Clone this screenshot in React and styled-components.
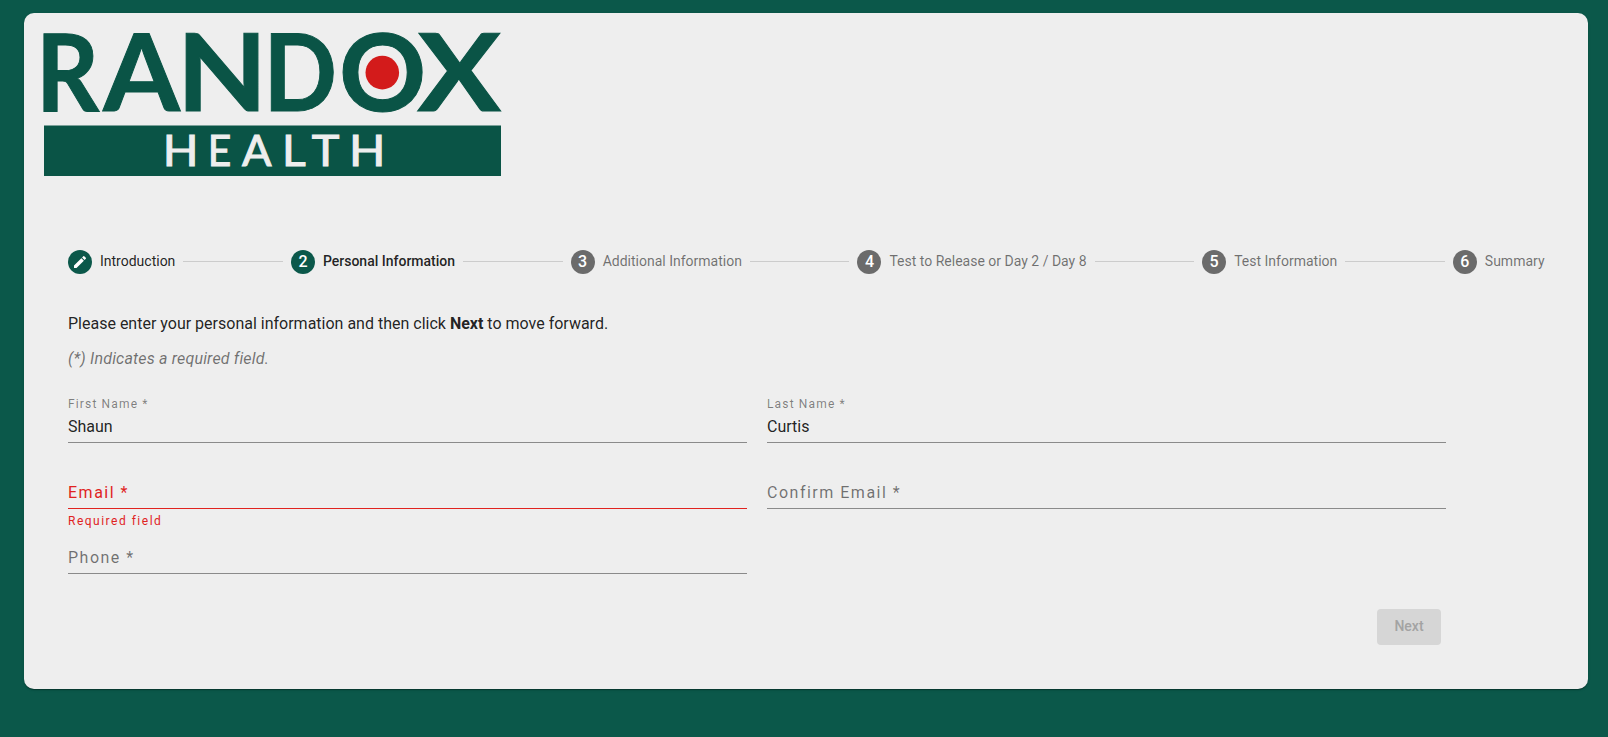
import React from "react";
import styled, { createGlobalStyle } from "styled-components";

const GlobalStyle = createGlobalStyle`
  * { box-sizing: border-box; }
  body {
    margin: 0;
    background: #0b584a;
    font-family: Roboto, "Liberation Sans", sans-serif;
    color: rgba(0, 0, 0, 0.87);
  }
`;

const Page = styled.div`
  min-height: 737px;
  padding: 13px 20px 48px 24px;
`;

const Card = styled.main`
  height: 676px;
  padding: 20px;
  border-radius: 10px;
  background: #eeeeee;
  box-shadow: 0 2px 1px -1px rgba(0, 0, 0, 0.2), 0 1px 1px rgba(0, 0, 0, 0.14),
    0 1px 3px rgba(0, 0, 0, 0.12);
`;

const LogoSvg = styled.svg`
  display: block;
  width: 457px;
  height: 143px;
  overflow: visible;
`;

const LogoText = styled.text`
  font-family: Lato, sans-serif;
  font-weight: ${(p) => p.$weight};
  font-size: ${(p) => p.$size}px;
  fill: ${(p) => p.$color};
  stroke: ${(p) => p.$color};
  stroke-width: ${(p) => p.$stroke}px;
`;

const Stepper = styled.ol`
  display: flex;
  align-items: center;
  height: 72px;
  margin: 50px 0 0;
  padding: 0 23.5px 0 24px;
  list-style: none;
`;

const Step = styled.li`
  display: flex;
  align-items: center;
  gap: 8px;
  font-size: 14px;
  line-height: 20px;
  white-space: nowrap;
  font-weight: ${(p) => (p.$state === "active" ? 500 : 400)};
  color: ${(p) => (p.$state === "todo" ? "rgba(0,0,0,.54)" : "rgba(0,0,0,.87)")};
`;

const StepIcon = styled.span`
  display: flex;
  align-items: center;
  justify-content: center;
  width: 24px;
  height: 24px;
  border-radius: 50%;
  font-size: 16px;
  font-weight: 500;
  color: #fff;
  background: ${(p) => (p.$state === "todo" ? "#6b6b6b" : "#0b584a")};
`;

const StepLabel = styled.span`
  padding-bottom: 2px;
`;

const StepLine = styled.li`
  flex: 1;
  height: 1px;
  margin: 0 8px 1px;
  background: #cccccc;
`;

const Form = styled.form`
  width: 1378px;
  margin: 15px 0 0 24px;
`;

const Intro = styled.p`
  margin: 0;
  font-size: 16px;
  line-height: 21px;
`;

const Hint = styled(Intro)`
  margin-top: 14px;
  font-style: italic;
  letter-spacing: 0.18px;
  color: rgba(0, 0, 0, 0.54);
`;

const Grid = styled.div`
  display: grid;
  grid-template-columns: 1fr 1fr;
  grid-template-rows: 66px 65px 66px;
  column-gap: 20px;
  margin-top: 10px;
`;

const Field = styled.div`
  display: flex;
  flex-direction: column;
  color: ${(p) => (p.$error ? "#e0231f" : "rgba(0,0,0,.54)")};
`;

const FieldBox = styled.div`
  display: flex;
  flex: 0 0 64px;
  flex-direction: column;
  justify-content: flex-end;
  padding-bottom: 6px;
  border-bottom: 1px solid ${(p) => (p.$error ? "#e0231f" : "#8a8a8a")};
`;

const FloatLabel = styled.label`
  font-size: 12px;
  line-height: 14px;
  letter-spacing: 1.15px;
  margin-bottom: 7px;
  color: rgba(0, 0, 0, 0.48);
`;

const EmptyLabel = styled.label`
  font-size: 16px;
  line-height: 18px;
  letter-spacing: 1.5px;
`;

const Value = styled.span`
  font-size: 16px;
  line-height: 18px;
  color: rgba(0, 0, 0, 0.87);
`;

const ErrorText = styled.span`
  margin-top: 5px;
  font-size: 12px;
  line-height: 14px;
  letter-spacing: 1.5px;
`;

const Actions = styled.div`
  display: flex;
  justify-content: flex-end;
  padding-right: 5px;
  margin-top: 33px;
`;

const NextButton = styled.button`
  width: 64px;
  height: 36px;
  padding: 0 0 2px;
  border: 0;
  border-radius: 4px;
  background: #d6d6d6;
  color: #a3a3a3;
  font: 500 14px/20px Roboto, sans-serif;
`;

// Each entry: character, left edge, right edge, then the glyph's ink bounds in em.
const brandLetters = [
  ["R", 0.3, 56.3, 0.085, 0.655],
  ["A", 59.7, 135.5, 0.003, 0.69],
  ["N", 142.8, 214.5, 0.085, 0.695],
  ["D", 227.8, 289.3, 0.085, 0.722],
  ["O", 299.2, 377.8, 0.04, 0.768],
  ["X", 374.5, 456.3, 0.008, 0.665],
];

const divisionLetters = [
  ["H", 123.2, 149.2, 0.095, 0.65],
  ["E", 167.5, 185.2, 0.095, 0.53],
  ["A", 198.3, 227.3, 0.006, 0.67],
  ["L", 242.5, 260.5, 0.095, 0.485],
  ["T", 268.5, 294.5, 0.015, 0.57],
  ["H", 309.5, 336, 0.095, 0.65],
];

function Letters({ letters, baseline, size, weight, color, stroke }) {
  return letters.map(([ch, x0, x1, l, r], i) => {
    const sx = (x1 - x0) / ((r - l) * size);
    return (
      <LogoText
        key={i}
        $size={size}
        $weight={weight}
        $color={color}
        $stroke={stroke}
        transform={`translate(${x0 - l * size * sx} ${baseline}) scale(${sx} 1)`}
      >
        {ch}
      </LogoText>
    );
  });
}

function Logo() {
  return (
    <LogoSvg viewBox="0 0 457 143" role="img" aria-label="Randox Health">
      <Letters letters={brandLetters} baseline={77.8} size={107.5} weight={700} color="#0a5446" stroke={1} />
      <circle cx="338.3" cy="39.6" r="16.8" fill="#d31b1b" />
      <rect y="92.5" width="457" height="50.5" fill="#0a5446" />
      <Letters letters={divisionLetters} baseline={133.2} size={42.8} weight={400} color="#eeeeee" stroke={1} />
    </LogoSvg>
  );
}

const steps = [
  ["Introduction", "done"],
  ["Personal Information", "active"],
  ["Additional Information", "todo"],
  ["Test to Release or Day 2 / Day 8", "todo"],
  ["Test Information", "todo"],
  ["Summary", "todo"],
];

function TextField({ label, value, error }) {
  return (
    <Field $error={!!error}>
      <FieldBox $error={!!error}>
        {value ? <FloatLabel>{label}</FloatLabel> : <EmptyLabel>{label}</EmptyLabel>}
        {value && <Value>{value}</Value>}
      </FieldBox>
      {error && <ErrorText>{error}</ErrorText>}
    </Field>
  );
}

export default function App() {
  return (
    <Page>
      <GlobalStyle />
      <Card>
        <Logo />
        <Stepper>
          {steps.map(([name, state], i) => (
            <React.Fragment key={name}>
              {i > 0 && <StepLine />}
              <Step $state={state}>
                <StepIcon $state={state}>
                  {state === "done" ? (
                    <svg width="16" height="16" viewBox="0 0 24 24" fill="#fff">
                      <path d="M3 17.25V21h3.75L17.81 9.94l-3.75-3.75L3 17.25zM20.71 7.04a1 1 0 0 0 0-1.41l-2.34-2.34a1 1 0 0 0-1.41 0l-1.83 1.83 3.75 3.75 1.83-1.83z" />
                    </svg>
                  ) : (
                    i + 1
                  )}
                </StepIcon>
                <StepLabel>{name}</StepLabel>
              </Step>
            </React.Fragment>
          ))}
        </Stepper>
        <Form>
          <Intro>
            Please enter your personal information and then click <b>Next</b> to move forward.
          </Intro>
          <Hint>(*) Indicates a required field.</Hint>
          <Grid>
            <TextField label="First Name *" value="Shaun" />
            <TextField label="Last Name *" value="Curtis" />
            <TextField label="Email *" error="Required field" />
            <TextField label="Confirm Email *" />
            <TextField label="Phone *" />
          </Grid>
          <Actions>
            <NextButton type="button" disabled>Next</NextButton>
          </Actions>
        </Form>
      </Card>
    </Page>
  );
}
